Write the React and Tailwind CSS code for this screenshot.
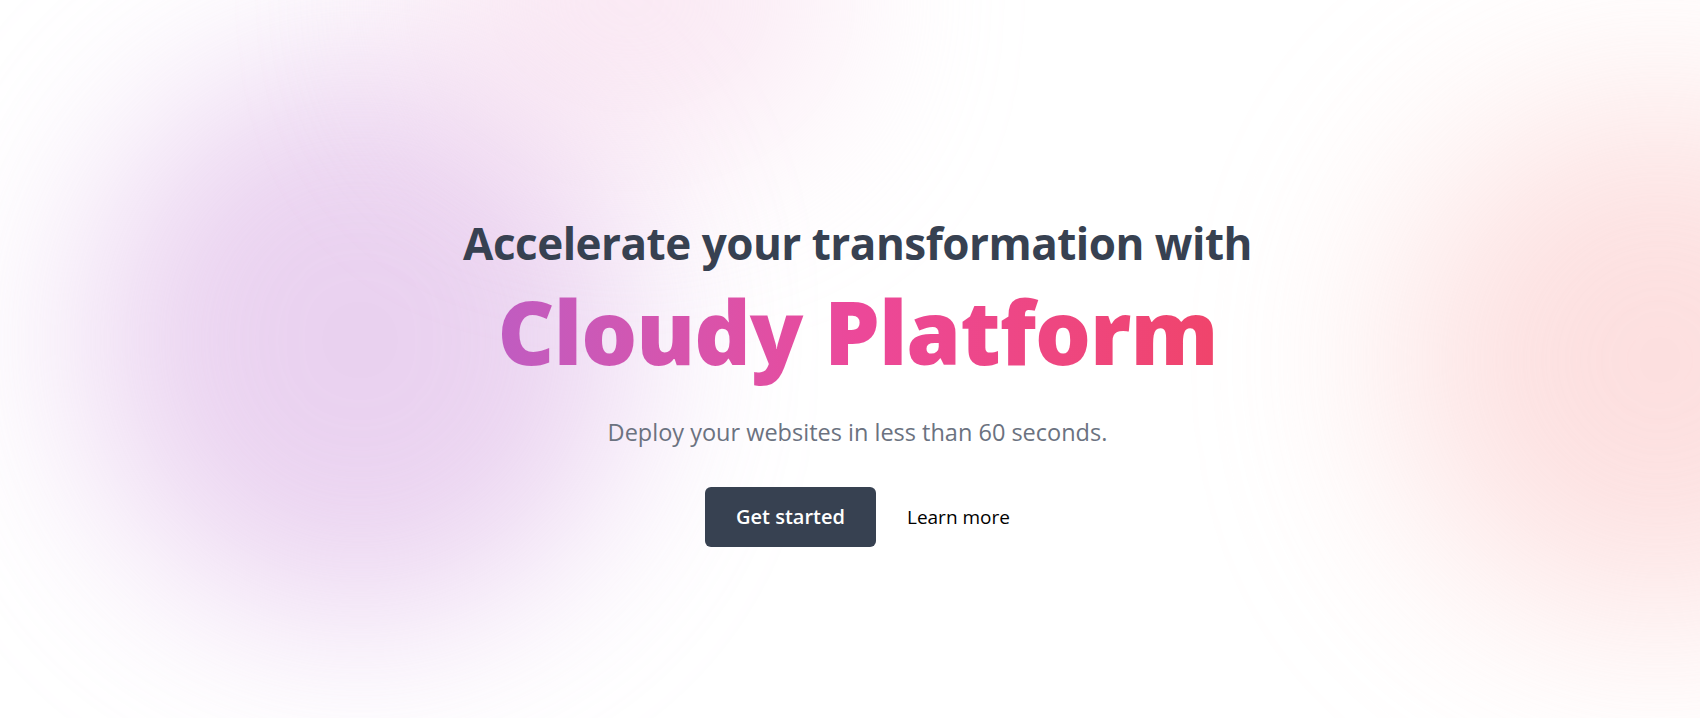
export default function App() {
  return (
    <div className="relative w-full h-[718px] overflow-hidden bg-white" style={{ fontFamily: '"Open Sans", "Noto Sans", sans-serif' }}>
      {/* background blobs */}
      <div className="absolute left-[90px] top-[60px] w-[540px] h-[560px] rounded-full bg-[#dcb4e6] opacity-60 blur-[90px]" />
      <div className="absolute left-[420px] top-[-160px] w-[420px] h-[320px] rounded-full bg-[#f5d2e8] opacity-50 blur-[90px]" />
      <div className="absolute left-[1400px] top-[100px] w-[520px] h-[520px] rounded-full bg-[#fbcaca] opacity-60 blur-[100px]" />

      <div className="relative flex flex-col items-center pt-[216px] pl-[15px]">
        <h1 className="text-center font-bold text-[#374151] text-[44px] leading-[54px] tracking-[-0.5px]">
          Accelerate your transformation with
        </h1>
        <h2 className="mt-[7px] font-extrabold text-[88px] leading-[108px] tracking-[-1px]">
          <span className="bg-gradient-to-r from-[#c05cc1] via-[#ec4899] to-[#f0446b] bg-clip-text text-transparent">
            Cloudy Platform
          </span>
        </h2>
        <p className="mt-[31px] text-[23.5px] leading-[32px] text-[#6b7280]">
          Deploy your websites in less than 60 seconds.
        </p>
        <div className="mt-[39px] flex items-center gap-[31px]">
          <button className="h-[60px] px-[31px] rounded-md bg-[#374151] text-white text-[20px] font-semibold">
            Get started
          </button>
          <button className="text-[19px] font-medium text-black">
            Learn more
          </button>
        </div>
      </div>
    </div>
  );
}
